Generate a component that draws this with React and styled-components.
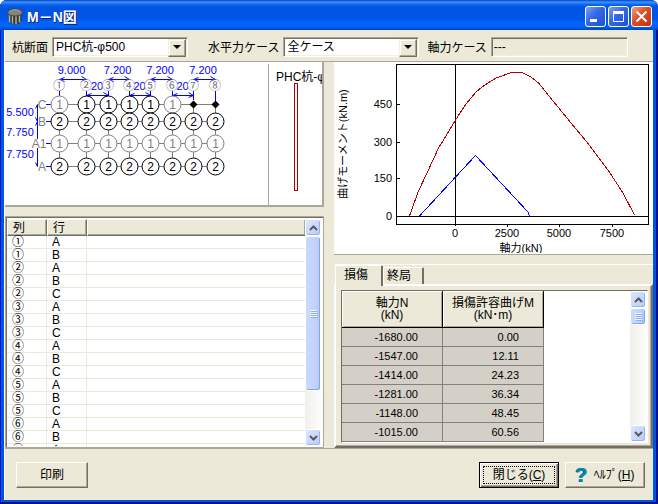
import styled, { createGlobalStyle } from "styled-components";
import { useState } from "react";

const COLUMNS = [59, 86, 108, 129, 150, 172, 193, 215];
const ROWS = [
    { name: 'C', y: 104 },
    { name: 'B', y: 121 },
    { name: 'A1', y: 143 },
    { name: 'A', y: 166 },
];
const DIGITS = '①②③④⑤⑥⑦⑧';
const PILES = {
    C: ['1g', '1', '1', '1', '1', '1g', 'dot', 'dot'],
    B: ['2', '2', '2', '2', '2', '2', '2', '2'],
    A1: ['1g', '1g', '1g', '1g', '1g', '1g', '1g', '1g'],
    A: ['2', '2', '2', '2', '2', '2', '2', '2'],
};
// odd spans sit between two column marks, only the middle of the number has room
const SPANS = ['9.000', '20', '7.200', '20', '7.200', '20', '7.200'];

const PILE_LIST = [
    ['①', 'A'], ['①', 'B'],
    ['②', 'A'], ['②', 'B'], ['②', 'C'],
    ['③', 'A'], ['③', 'B'], ['③', 'C'],
    ['④', 'A'], ['④', 'B'], ['④', 'C'],
    ['⑤', 'A'], ['⑤', 'B'], ['⑤', 'C'],
    ['⑥', 'A'], ['⑥', 'B'],
    ['⑦', 'A'],
];

const MOMENTS = [
    ['-1680.00', '0.00'],
    ['-1547.00', '12.11'],
    ['-1414.00', '24.23'],
    ['-1281.00', '36.34'],
    ['-1148.00', '48.45'],
    ['-1015.00', '60.56'],
];

const PilePlan = () => (
    <Drawing width="262" height="142" viewBox="6 63 262 142">
        <g stroke="#808080" shapeRendering="crispEdges">
            {ROWS.map(r => <line key={r.name} x1="59" x2="215" y1={r.y + 0.5} y2={r.y + 0.5}/>)}
            {COLUMNS.map(x => <line key={x} x1={x + 0.5} x2={x + 0.5} y1="104" y2="166"/>)}
        </g>
        <g stroke="#0000ff" fill="none">
            {SPANS.map((_, i) => {
                const a = COLUMNS[i] + 0.5;
                const b = COLUMNS[i + 1] + 0.5;
                const y = i % 2 ? 95.5 : 79.5;
                return (
                    <path key={i} d={`M${a} ${y}H${b}M${a + 5} ${y - 2}L${a} ${y}L${a + 5} ${y + 2}M${b - 5} ${y - 3}L${b} ${y}L${b - 5} ${y + 2}`}/>
                );
            })}
            {COLUMNS.map((x, i) => <path key={x} d={`M${x + 0.5} 91V${i === 7 ? 104 : i === 6 ? 100 : 96}`}/>)}
            <path d="M37.5 104.5V166.5M35.5 108.5L37.5 104.5M35.5 117.5L37.5 121.5L35.5 125.5M35.5 139.5L37.5 143.5M35.5 162.5L37.5 166.5"/>
            {ROWS.map(r => <path key={r.name} d={`M46 ${r.y + 0.5}H51`}/>)}
        </g>
        <g fill="#0000ff" textAnchor="middle" fontSize="11">
            {SPANS.map((s, i) => (
                <text key={i} x={(COLUMNS[i] + COLUMNS[i + 1]) / 2 - (i % 2 ? 0 : 1)} y={i % 2 ? 90 : 74}>{s}</text>
            ))}
            <text x="20" y="116">5.500</text>
            <text x="20" y="136">7.750</text>
            <text x="20" y="158">7.750</text>
        </g>
        {COLUMNS.map((x, i) => (
            <g key={x}>
                <circle cx={x} cy="85.5" r="5.5" fill="#fff"/>
                <Circled x={x} y="90">{DIGITS[i]}</Circled>
            </g>
        ))}
        {ROWS.map(r => (
            <g key={r.name}>
                <rect x={r.name === 'A1' ? 32 : 38} y={r.y - 4} width={r.name === 'A1' ? 14 : 8} height="9" fill="#fff"/>
                <text x={r.name === 'A1' ? 39 : 42} y={r.y + 5} textAnchor="middle" fontSize="12" fill="#808080">{r.name}</text>
                {PILES[r.name].map((kind, i) => {
                    const x = COLUMNS[i] + 0.5;
                    const y = r.y + 0.5;
                    if (kind === 'dot') {
                        return <path key={i} d={`M${x - 4} ${y}L${x} ${y - 4}L${x + 4} ${y}L${x} ${y + 4}Z`}/>;
                    }
                    const color = kind.endsWith('g') ? '#808080' : '#000';
                    return (
                        <g key={i}>
                            <circle cx={x} cy={y} r="8.5" fill="#fff" stroke={color}/>
                            <text x={x} y={y + 4} textAnchor="middle" fontSize="12" fill={color}>{kind[0]}</text>
                        </g>
                    );
                })}
            </g>
        ))}
    </Drawing>
)

const MomentChart = () => (
    <Chart viewBox="335 63 317 190">
        <g fill="none" stroke="#000" shapeRendering="crispEdges">
            <rect x="396.5" y="64.5" width="252" height="160"/>
            <path d="M455.5 64V226M396 216.5H649M396 104.5H400M396 142.5H400M396 178.5H400M507.5 224V227M559.5 224V227M612.5 224V227"/>
        </g>
        <path
            d="M409.5 216L418 192L428 171L438.5 148L446 136L455.5 120L466 104L476 92L482 87L488 83L496 78L504.5 75L510 73L517 72.5L523 73L531 77L539 83.5L551 98.5L564.5 115L588 143.5L608 170L623 193L634.5 215"
            fill="none" stroke="#b00000" shapeRendering="crispEdges"/>
        <path d="M419.5 216L475.5 155.5L528 212L529.5 216" fill="none" stroke="#0000ff" shapeRendering="crispEdges"/>
        <g fontSize="11" textAnchor="end">
            <text x="392" y="108">450</text>
            <text x="392" y="146">300</text>
            <text x="392" y="182">150</text>
            <text x="392" y="220">0</text>
        </g>
        <g fontSize="11" textAnchor="middle">
            <text x="455" y="237">0</text>
            <text x="507" y="237">2500</text>
            <text x="559" y="237">5000</text>
            <text x="612" y="237">7500</text>
            <text x="521" y="252">軸力(kN)</text>
            <text transform="translate(347 144) rotate(-90)">曲げモーメント(kN.m)</text>
        </g>
    </Chart>
)

const Chevron = ({ up }) => (
    <svg width="9" height="6" viewBox="0 0 9 6">
        <path d={up ? 'M1 5L4.5 1.5L8 5' : 'M1 1L4.5 4.5L8 1'} fill="none" stroke="#5a5a58" strokeWidth="2"/>
    </svg>
)

const ScrollBar = ({ thumb }) => (
    <Track>
        <ScrollButton aria-label="上へ"><Chevron up/></ScrollButton>
        <Thumb $size={thumb}><i/><i/><i/><i/></Thumb>
        <Space/>
        <ScrollButton aria-label="下へ"><Chevron/></ScrollButton>
    </Track>
)

export default function App() {
    const [tab, setTab] = useState('damage');

    return (
        <Window>
            <GlobalStyle/>
            <TitleBar>
                <svg width="16" height="17" viewBox="0 0 16 17">
                    <path d="M1.5 4V14H4V16H6V15H7V17H10V15H11V16H13V14H14.5V4Z" fill="#33332f"/>
                    <path d="M2.5 6V14M5.5 7V15.5M9 7V16.5M12.5 6V14.5" stroke="#b4b2a6" strokeWidth="1.5"/>
                    <ellipse cx="8" cy="4.5" rx="7.5" ry="3.5" fill="#85847c" stroke="#44443e"/>
                    <path d="M2.5 3.5Q8 0 13 3" fill="none" stroke="#a5a399"/>
                </svg>
                <Title>M－N図</Title>
                <CaptionButton aria-label="最小化">
                    <svg width="19" height="19"><path d="M4 13.5H11" stroke="#fff" strokeWidth="3"/></svg>
                </CaptionButton>
                <CaptionButton aria-label="最大化">
                    <svg width="19" height="19">
                        <path d="M4.5 5V14.5H14.5V5" fill="none" stroke="#fff"/>
                        <path d="M4 5.5H15" stroke="#fff" strokeWidth="3"/>
                    </svg>
                </CaptionButton>
                <CaptionButton aria-label="閉じる" $close>
                    <svg width="19" height="19"><path d="M4.5 4.5L14.5 14.5M14.5 4.5L4.5 14.5" stroke="#fff" strokeWidth="2"/></svg>
                </CaptionButton>
            </TitleBar>
            <Body>
                <Toolbar>
                    <Field $spaced>
                        <label htmlFor="section">杭断面</label>
                        <SelectBox>
                            <select id="section"><option>PHC杭-φ500</option></select>
                        </SelectBox>
                    </Field>
                    <Field>
                        <label htmlFor="force">水平力ケース</label>
                        <SelectBox>
                            <select id="force"><option>全ケース</option></select>
                        </SelectBox>
                    </Field>
                    <Field>
                        <label htmlFor="axial">軸力ケース</label>
                        <ReadOnly id="axial" value="---" readOnly/>
                    </Field>
                </Toolbar>
                <Main>
                    <Column>
                        <PlanPanel>
                            <PilePlan/>
                            <SectionPane>
                                <span>PHC杭-φ</span>
                                <svg width="4" height="108"><rect x="0.5" y="0.5" width="3" height="107" fill="#fff" stroke="#b00000"/></svg>
                            </SectionPane>
                        </PlanPanel>
                        <ListFrame>
                            <Clip>
                                <ListTable>
                                    <thead>
                                        <tr><th>列</th><th>行</th><th/></tr>
                                    </thead>
                                    <tbody>
                                        {PILE_LIST.map(([col, row]) => (
                                            <tr key={col + row}><td>{col}</td><td>{row}</td><td/></tr>
                                        ))}
                                    </tbody>
                                </ListTable>
                            </Clip>
                            <ScrollBar thumb={155}/>
                        </ListFrame>
                    </Column>
                    <Column>
                        <ChartPanel><MomentChart/></ChartPanel>
                        <TabArea>
                            <Tabs role="tablist">
                                <Tab role="tab" $active={tab === 'damage'} onClick={() => setTab('damage')}>損傷</Tab>
                                <Tab role="tab" $active={tab === 'ultimate'} onClick={() => setTab('ultimate')}>終局</Tab>
                            </Tabs>
                            <TabPanel role="tabpanel">
                                <GridFrame>
                                    <Clip>
                                        <GridTable>
                                            <thead>
                                                <tr>
                                                    <th>軸力N<br/>(kN)</th>
                                                    <th>損傷許容曲げM<br/>(kN･m)</th>
                                                </tr>
                                            </thead>
                                            <tbody>
                                                {MOMENTS.map(([n, m]) => (
                                                    <tr key={n}><td>{n}</td><td>{m}</td></tr>
                                                ))}
                                            </tbody>
                                        </GridTable>
                                    </Clip>
                                    <ScrollBar thumb={17}/>
                                </GridFrame>
                            </TabPanel>
                        </TabArea>
                    </Column>
                </Main>
                <Footer>
                    <Button>印刷</Button>
                    <Space/>
                    <Button $default $wide><span>閉じる(<u>C</u>)</span></Button>
                    <Button $wide>
                        <Mark aria-hidden="true">?</Mark>
                        <span>ﾍﾙﾌﾟ(<u>H</u>)</span>
                    </Button>
                </Footer>
            </Body>
        </Window>
    )
}

const GlobalStyle = createGlobalStyle`
    * {
        box-sizing: border-box;
    }

    body {
        margin: 0;
        background: #fff;
    }

    body, button, input, select {
        font-family: "Liberation Sans", "Noto Sans CJK JP", sans-serif;
        font-size: 12px;
        color: #000;
    }
`

const Window = styled.div`
    display: flex;
    flex-direction: column;
    height: 100vh;
    padding: 0 5px 4px 4px;
    border-radius: 7px 7px 0 0;
    background: #0054e3;
    box-shadow: inset -2px -2px 0 #00138c, inset 1px 0 0 #0019cf;
`

const TitleBar = styled.div`
    display: flex;
    align-items: center;
    flex: none;
    gap: 2px;
    height: 30px;
    margin: 0 -5px 0 -4px;
    padding: 3px 6px 0 7px;
    border-radius: 7px 7px 0 0;
    background: linear-gradient(#0a3fc0 0, #3c93ff 2px, #0660ec 5px, #0053e0 9px, #0056e8 19px, #0065fd 23px, #0062f5 27px, #0042c0 30px);
`

const Title = styled.div`
    flex: 1;
    padding-left: 2px;
    color: #fff;
    font-size: 14px;
    font-weight: bold;
    line-height: 20px;
    text-shadow: 1px 1px 0 #0f1c70;
`

const CaptionButton = styled.button`
    width: 21px;
    height: 21px;
    padding: 0;
    border: 1px solid #fff;
    border-radius: 3px;
    background: ${p => p.$close
        ? 'linear-gradient(135deg, #f0a088, #dd4b26 45%, #c03510)'
        : 'linear-gradient(135deg, #7c9ff5, #3467e8 45%, #1c50d8)'};

    svg {
        display: block;
    }
`

const Body = styled.div`
    display: flex;
    flex-direction: column;
    flex: 1;
    min-height: 0;
    background: #ece9d8;
    border-left: 1px solid #fff;
`

const Toolbar = styled.div`
    display: flex;
    align-items: center;
    flex: none;
    gap: 8px;
    height: 32px;
    padding: 2px 7px 0;
    border-bottom: 1px solid #aca899;
`

const Field = styled.div`
    display: flex;
    align-items: center;
    gap: 4px;
    margin-right: ${p => p.$spaced ? '12px' : '0'};
    white-space: nowrap;
`

const SelectBox = styled.div`
    position: relative;
    width: 136px;

    select {
        display: block;
        width: 100%;
        height: 20px;
        padding: 0 20px 0 3px;
        appearance: none;
        background: #fff;
        border: 1px solid;
        border-color: #aca899 #fff #fff #aca899;
        border-radius: 0;
        box-shadow: inset 1px 1px 0 #716f64, inset -1px -1px 0 #f1efe2;
        outline: none;
    }

    &::before {
        content: '';
        position: absolute;
        top: 2px;
        right: 2px;
        width: 16px;
        height: 16px;
        background: #ece9d8;
        border: 1px solid;
        border-color: #f1efe2 #716f64 #716f64 #f1efe2;
        box-shadow: inset -1px -1px 0 #aca899, inset 1px 1px 0 #fff;
        pointer-events: none;
    }

    &::after {
        content: '';
        position: absolute;
        top: 8px;
        right: 7px;
        border: 4px solid transparent;
        border-top-color: #000;
        border-bottom: 0;
        pointer-events: none;
    }
`

const ReadOnly = styled.input`
    width: 137px;
    height: 20px;
    padding: 0 2px;
    background: #ece9d8;
    border: 1px solid;
    border-color: #aca899 #fff #fff #aca899;
    box-shadow: inset 1px 1px 0 #716f64, inset -1px -1px 0 #f1efe2;
    outline: none;
`

const Main = styled.div`
    display: grid;
    grid-template-columns: 1fr 1fr;
    gap: 10px;
    flex: 1;
    min-height: 0;
`

const Column = styled.div`
    display: flex;
    flex-direction: column;
    gap: 9px;
    min-width: 0;
    min-height: 0;
`

const PlanPanel = styled.div`
    display: flex;
    flex: none;
    overflow: hidden;
    background: #fff;
    border: solid #aca899;
    border-width: 0 2px 2px 0;
    padding: 1px 0 0 1px;
`

const Drawing = styled.svg`
    display: block;
    flex: none;
`

const Circled = styled.text`
    font-family: "Noto Sans CJK JP", sans-serif;
    font-size: 12px;
    text-anchor: middle;
    fill: #707070;
`

const SectionPane = styled.div`
    display: flex;
    flex-direction: column;
    flex: 1;
    min-width: 0;
    margin-top: 1px;
    padding: 7px 0 0 7px;
    border-left: 1px solid #aca899;
    overflow: hidden;
    white-space: nowrap;
    line-height: 12px;

    svg {
        margin-left: 18px;
    }
`

const ListFrame = styled.div`
    display: flex;
    flex: 1;
    min-height: 0;
    background: #fff;
    border: 1px solid #aca899;
    box-shadow: inset 1px 1px 0 #716f64;
    padding: 2px 2px 1px 1px;
`

const Clip = styled.div`
    flex: 1;
    min-width: 0;
    overflow: hidden;
`

const ListTable = styled.table`
    width: 100%;
    table-layout: fixed;
    border-collapse: separate;
    border-spacing: 0;

    th, td {
        padding: 0 0 0 5px;
        text-align: left;
        font-weight: normal;
        white-space: nowrap;
    }

    th:not(:last-child) {
        width: 40px;
    }

    th {
        height: 17px;
        line-height: 14px;
        background: #ece9d8;
        border: 1px solid;
        border-color: #fff #716f64 #716f64 #fff;
        box-shadow: inset -1px -1px 0 #aca899;
    }

    th:last-child {
        border-right: 0;
    }

    td {
        height: 13px;
        line-height: 12px;
        border: solid #ece9d8;
        border-width: 0 1px 1px 0;
    }

    td:last-child {
        border-right: 0;
    }
`

const Track = styled.div`
    display: flex;
    flex-direction: column;
    flex: none;
    width: 16px;
    background: linear-gradient(90deg, #f0efea, #fdfdfb);
`

const ScrollButton = styled.button`
    display: flex;
    align-items: center;
    justify-content: center;
    flex: none;
    height: 17px;
    padding: 0;
    border: 1px solid #fff;
    border-radius: 3px;
    background: linear-gradient(135deg, #dbe5ff, #b9cbf8);
    box-shadow: inset -1px -1px 0 #98b3ee;
`

const Thumb = styled.div`
    display: flex;
    flex-direction: column;
    align-items: center;
    justify-content: center;
    gap: 1px;
    flex: 0 1 ${p => p.$size}px;
    border: 1px solid #fff;
    border-radius: 3px;
    background: linear-gradient(90deg, #cbd9ff, #c2d3fc 60%, #b5c8f5);
    box-shadow: inset -1px -1px 0 #86a5e8;

    i {
        width: 7px;
        height: 1px;
        background: #eef4fe;
        box-shadow: 1px 1px 0 #8cb0f8;
    }
`

const Space = styled.div`
    flex: 1;
`

const ChartPanel = styled.div`
    flex: none;
    padding: 1px;
    background: #fff;
    border: solid #aca899;
    border-width: 0 0 1px;
`

const Chart = styled.svg`
    display: block;
    width: 100%;
`

const TabArea = styled.div`
    display: flex;
    flex-direction: column;
    flex: 1;
    min-height: 0;
    border-top: 1px solid #fff;
`

const Tabs = styled.div`
    display: flex;
    align-items: flex-start;
    flex: none;
    height: 19px;
    padding-left: 1px;
`

const Tab = styled.button`
    position: relative;
    z-index: 1;
    height: ${p => p.$active ? '21px' : '17px'};
    margin-top: ${p => p.$active ? '0' : '2px'};
    padding: ${p => p.$active ? '0 13px 3px 8px' : '0 11px 0 3px'};
    line-height: 14px;
    background: #ece9d8;
    border: 1px solid #fff;
    border-right: 2px solid #716f64;
    border-bottom: 0;
    border-radius: 2px 2px 0 0;
`

const TabPanel = styled.div`
    display: flex;
    flex: 1;
    min-height: 0;
    padding: 4px 3px 3px 5px;
    border: 2px solid;
    border-color: #fff #716f64 #716f64 #fff;
    box-shadow: inset -1px -1px 0 #aca899;
`

const GridFrame = styled.div`
    display: flex;
    flex: 1;
    min-height: 0;
    background: #fff;
    border: 1px solid;
    border-color: #716f64 #fff #fff #716f64;
    padding-right: 1px;
`

const GridTable = styled.table`
    width: 202px;
    table-layout: fixed;
    border-collapse: separate;
    border-spacing: 0;

    th {
        height: 37px;
        padding: 0;
        line-height: 12px;
        font-weight: normal;
        background: #ece9d8;
        border: solid #000;
        border-width: 0 1px 1px 0;
        box-shadow: inset 1px 1px 0 #fff, inset -1px -1px 0 #aca899;
        white-space: nowrap;
    }

    td {
        height: 19px;
        padding: 0 24px 0 0;
        line-height: 14px;
        text-align: right;
        font-size: 11px;
        background: #d4d0c8;
        border: solid #808080;
        border-width: 0 1px 1px 0;
    }
`

const Footer = styled.div`
    display: flex;
    align-items: flex-start;
    flex: none;
    gap: 6px;
    height: 52px;
    padding: 13px 8px 0 11px;
    border-top: 1px solid #aca899;
`

const Button = styled.button`
    display: flex;
    align-items: center;
    justify-content: center;
    width: ${p => p.$wide ? '80px' : '72px'};
    height: 26px;
    padding: 0;
    line-height: 16px;
    background: #ece9d8;
    border: 1px solid;
    border-color: ${p => p.$default ? '#000' : '#fff #716f64 #716f64 #fff'};
    box-shadow: ${p => p.$default
        ? 'inset 1px 1px 0 #fff, inset -1px -1px 0 #716f64, inset -2px -2px 0 #aca899'
        : 'inset -1px -1px 0 #aca899'};
    outline: ${p => p.$default ? '1px dotted #000' : 'none'};
    outline-offset: -5px;
    white-space: nowrap;
`

const Mark = styled.span`
    margin-right: 6px;
    color: #008c98;
    font-size: 20px;
    font-weight: bold;
    line-height: 20px;
    text-shadow: -1px 0 0 #0050c0;
`
